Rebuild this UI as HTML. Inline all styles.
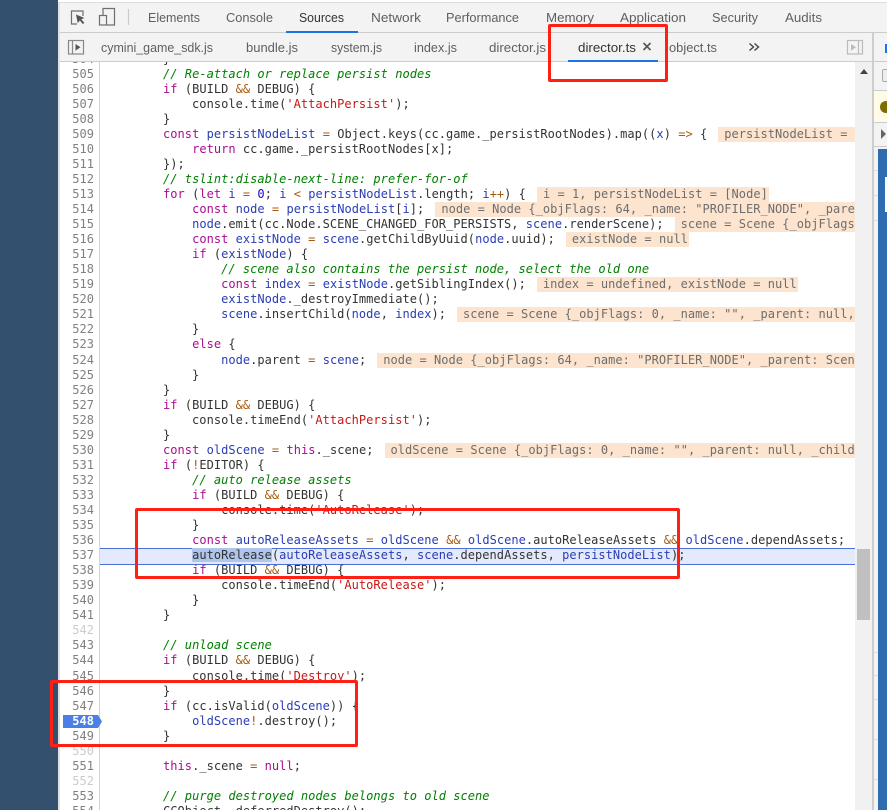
<!DOCTYPE html>
<html><head><meta charset="utf-8"><style>
html,body{margin:0;padding:0;width:887px;height:810px;overflow:hidden;background:#fff}
.a{position:absolute}
#gut,#code{font:12px/15.04px "DejaVu Sans Mono","Liberation Mono",monospace;white-space:pre;letter-spacing:.03px;filter:blur(.25px)}
#gut{left:60px;top:51.46px;width:34px;text-align:right;color:#808080}
#gut i{font-style:normal;color:#ccc}
#clip{left:100px;top:62px;width:755px;height:748px;overflow:hidden}
#code{position:absolute;left:5px;top:-10.42px;color:#333}
.k{color:#aa0d91}.v{color:#2a3db5}.o{color:#a8590c}.s{color:#c41a16}.c{color:#008000;font-style:italic}.n{color:#1c00cf}
.h{background:#fde4cf;color:#6e6e6e;margin-left:11px;padding:0 1px 0 6px;display:inline-block;height:15px;vertical-align:top}
.sel{background:#b0c5ec}
.box{position:absolute;border:3px solid #ff1f14;border-radius:2px;box-sizing:border-box}
</style></head><body>
<div class="a" style="left:0;top:0;width:58px;height:810px;background:#34506f"></div>
<div class="a" style="left:58px;top:0;width:829px;height:3px;background:#fff"></div>
<div class="a" style="left:58px;top:2px;width:829px;height:1px;background:#ddd"></div>
<div class="a" style="left:58px;top:3px;width:829px;height:59px;background:#f3f3f3"></div>
<div class="a" style="left:58px;top:3px;width:2px;height:807px;background:#e2e2e2"></div>
<div class="a" style="left:60px;top:32px;width:827px;height:1px;background:#ccc"></div>
<div class="a" style="left:60px;top:61px;width:827px;height:1px;background:#ccc"></div>
<div class="a" style="left:286px;top:31px;width:72px;height:2px;background:#1a73e8"></div>
<div class="a" style="left:568px;top:60px;width:90px;height:2px;background:#1a73e8"></div>

<svg class="a" style="left:0;top:0;filter:blur(.25px)" width="887" height="62" font-family="Liberation Sans, sans-serif" font-size="12.5" fill="#5f5f5f">
<g fill="none" stroke="#6e6e6e" stroke-width="1.2">
<path d="M77 24H71.5V11H83V16"/>
<rect x="99.5" y="15.5" width="7" height="9.5"/>
<path d="M103 15V8.5H114.5V25H107"/>
<path d="M128.5 9V25" stroke="#ccc"/>
<rect x="68.5" y="40.5" width="15" height="13.5" stroke="#888"/>
<path d="M72.5 40.5V54" stroke="#888"/>
<rect x="847.5" y="40.5" width="15" height="13.5" stroke="#bbb"/>
<path d="M858.5 40.5V54" stroke="#bbb"/>
<path d="M749.5 43.5l4 3.5-4 3.5M754.5 43.5l4 3.5-4 3.5" stroke="#444" stroke-width="1.4"/>
<path d="M643.5 43l7 7M650.5 43l-7 7" stroke="#555" stroke-width="1.6"/>
</g>
<path d="M76 14.5l8.5 3.5-3.2 1.3 3 3.6-1.4 1.2-3-3.6-2.2 2.6z" fill="#555"/>
<path d="M75.5 44l5 3.3-5 3.3z" fill="#555"/>
<path d="M851 44l5 3.3-5 3.3z" fill="#bbb"/>
<text x="148" y="22" textLength="52" lengthAdjust="spacingAndGlyphs">Elements</text>
<text x="226" y="22" textLength="47" lengthAdjust="spacingAndGlyphs">Console</text>
<text x="299" y="22" textLength="45" lengthAdjust="spacingAndGlyphs" fill="#333">Sources</text>
<text x="371" y="22" textLength="50" lengthAdjust="spacingAndGlyphs">Network</text>
<text x="446" y="22" textLength="73" lengthAdjust="spacingAndGlyphs">Performance</text>
<text x="546" y="22" textLength="48" lengthAdjust="spacingAndGlyphs">Memory</text>
<text x="620" y="22" textLength="66" lengthAdjust="spacingAndGlyphs">Application</text>
<text x="712" y="22" textLength="46" lengthAdjust="spacingAndGlyphs">Security</text>
<text x="785" y="22" textLength="37" lengthAdjust="spacingAndGlyphs">Audits</text>
<text x="101" y="52" textLength="112" lengthAdjust="spacingAndGlyphs">cymini_game_sdk.js</text>
<text x="246" y="52" textLength="52" lengthAdjust="spacingAndGlyphs">bundle.js</text>
<text x="331" y="52" textLength="51" lengthAdjust="spacingAndGlyphs">system.js</text>
<text x="414" y="52" textLength="43" lengthAdjust="spacingAndGlyphs">index.js</text>
<text x="489" y="52" textLength="57" lengthAdjust="spacingAndGlyphs">director.js</text>
<text x="578" y="52" textLength="58" lengthAdjust="spacingAndGlyphs" fill="#333">director.ts</text>
<text x="669" y="52" textLength="48" lengthAdjust="spacingAndGlyphs">object.ts</text>
</svg>

<!-- right side -->
<div class="a" style="left:855px;top:62px;width:17px;height:748px;background:#f1f1f1"></div>
<div class="a" style="left:857px;top:549px;width:13px;height:71px;background:#c0c0c0"></div>
<svg class="a" style="left:859px;top:67px" width="10" height="8"><path d="M1 7l4-5 4 5z" fill="#444"/></svg>
<div class="a" style="left:872px;top:33px;width:2px;height:777px;background:#cdcdcd"></div>
<div class="a" style="left:874px;top:62px;width:13px;height:748px;background:#f3f3f3"></div>
<div class="a" style="left:885px;top:44px;width:2px;height:9px;background:#1a73e8"></div>
<div class="a" style="left:882px;top:69px;width:8px;height:11px;border:1px solid #aaa;border-radius:2px;background:#eee"></div>
<div class="a" style="left:874px;top:90px;width:13px;height:1px;background:#ccc"></div>
<div class="a" style="left:874px;top:91px;width:13px;height:31px;background:#fffbe6"></div>
<div class="a" style="left:880px;top:101px;width:12px;height:12px;border-radius:50%;background:#7d6b00"></div>
<div class="a" style="left:874px;top:122px;width:13px;height:1px;background:#ccc"></div>
<div class="a" style="left:874px;top:146px;width:13px;height:1px;background:#ccc"></div>
<svg class="a" style="left:880px;top:129px" width="7" height="10"><path d="M1 0l5 5-5 5z" fill="#666"/></svg>
<div class="a" style="left:878px;top:149px;width:9px;height:661px;background:#2f6bb1"></div>
<div class="a" style="left:885px;top:177px;width:2px;height:35px;background:#fff"></div>
<div class="a" style="left:874px;top:170px;width:4px;height:1px;background:#ddd"></div>
<div class="a" style="left:874px;top:195px;width:4px;height:1px;background:#ddd"></div>
<div class="a" style="left:874px;top:220px;width:4px;height:1px;background:#ddd"></div>
<div class="a" style="left:874px;top:652px;width:4px;height:1px;background:#ddd"></div>
<div class="a" style="left:874px;top:675px;width:4px;height:1px;background:#ddd"></div>
<div class="a" style="left:874px;top:699px;width:4px;height:1px;background:#ddd"></div>
<div class="a" style="left:874px;top:739px;width:4px;height:1px;background:#ddd"></div>
<div class="a" style="left:874px;top:779px;width:4px;height:1px;background:#ddd"></div>

<!-- gutter -->
<div class="a" style="left:60px;top:62px;width:39px;height:748px;background:#fff"></div>
<div class="a" style="left:99px;top:62px;width:1px;height:748px;background:#d4d4d4"></div>
<div class="a" style="left:100px;top:548px;width:755px;height:15px;background:#e4eafb;border-top:1px solid #4a70d9;border-bottom:1px solid #4a70d9"></div>
<svg class="a" style="left:63px;top:715px" width="40" height="14"><path d="M0 0H35L39 6.5 35 13H0z" fill="#4c7fe6"/></svg>
<div class="a" style="left:60px;top:62px;width:39px;height:748px;overflow:hidden"><div id="gut" class="a" style="left:0;top:-10.42px">504
505
506
507
508
509
510
511
512
513
514
515
516
517
518
519
520
521
522
523
524
525
526
527
528
529
530
531
532
533
534
535
536
537
538
539
540
541
<i>542</i>
543
544
545
546
547
<b style="color:#fff">548</b>
549
<i>550</i>
551
<i>552</i>
553
554</div></div>

<div id="clip" class="a"><div id="code">        }
        <span class="c">// Re-attach or replace persist nodes</span>
        <span class="k">if</span> (BUILD <span class="o">&amp;&amp;</span> DEBUG) {
            console.time(<span class="s">'AttachPersist'</span>);
        }
        <span class="k">const</span> <span class="v">persistNodeList</span> <span class="o">=</span> Object.keys(cc.game._persistRootNodes).map((<span class="v">x</span>) <span class="o">=&gt;</span> {<span class="h">persistNodeList = ["PROFILER_NODE"]</span>
            <span class="k">return</span> cc.game._persistRootNodes[x];
        });
        <span class="c">// tslint:disable-next-line: prefer-for-of</span>
        <span class="k">for</span> (<span class="k">let</span> <span class="v">i</span> <span class="o">=</span> <span class="n">0</span>; <span class="v">i</span> <span class="o">&lt;</span> <span class="v">persistNodeList</span>.length; <span class="v">i</span><span class="o">++</span>) {<span class="h">i = 1, persistNodeList = [Node]</span>
            <span class="k">const</span> <span class="v">node</span> <span class="o">=</span> <span class="v">persistNodeList</span>[<span class="v">i</span>];<span class="h">node = Node {_objFlags: 64, _name: "PROFILER_NODE", _parent: Scene, _children: []}</span>
            <span class="v">node</span>.emit(cc.Node.SCENE_CHANGED_FOR_PERSISTS, <span class="v">scene</span>.renderScene);<span class="h">scene = Scene {_objFlags: 0, _name: "", _parent: null}</span>
            <span class="k">const</span> <span class="v">existNode</span> <span class="o">=</span> <span class="v">scene</span>.getChildByUuid(<span class="v">node</span>.uuid);<span class="h">existNode = null</span>
            <span class="k">if</span> (<span class="v">existNode</span>) {
                <span class="c">// scene also contains the persist node, select the old one</span>
                <span class="k">const</span> <span class="v">index</span> <span class="o">=</span> <span class="v">existNode</span>.getSiblingIndex();<span class="h">index = undefined, existNode = null</span>
                <span class="v">existNode</span>._destroyImmediate();
                <span class="v">scene</span>.insertChild(<span class="v">node</span>, <span class="v">index</span>);<span class="h">scene = Scene {_objFlags: 0, _name: "", _parent: null, _children: [], _id: ""}</span>
            }
            <span class="k">else</span> {
                <span class="v">node</span>.parent <span class="o">=</span> <span class="v">scene</span>;<span class="h">node = Node {_objFlags: 64, _name: "PROFILER_NODE", _parent: Scene, _children: []}</span>
            }
        }
        <span class="k">if</span> (BUILD <span class="o">&amp;&amp;</span> DEBUG) {
            console.timeEnd(<span class="s">'AttachPersist'</span>);
        }
        <span class="k">const</span> <span class="v">oldScene</span> <span class="o">=</span> <span class="k">this</span>._scene;<span class="h">oldScene = Scene {_objFlags: 0, _name: "", _parent: null, _children: [], _id: ""}</span>
        <span class="k">if</span> (<span class="o">!</span>EDITOR) {
            <span class="c">// auto release assets</span>
            <span class="k">if</span> (BUILD <span class="o">&amp;&amp;</span> DEBUG) {
                console.time(<span class="s">'AutoRelease'</span>);
            }
            <span class="k">const</span> <span class="v">autoReleaseAssets</span> <span class="o">=</span> <span class="v">oldScene</span> <span class="o">&amp;&amp;</span> <span class="v">oldScene</span>.autoReleaseAssets <span class="o">&amp;&amp;</span> <span class="v">oldScene</span>.dependAssets;
            <span class="sel">autoRelease</span>(<span class="v">autoReleaseAssets</span>, <span class="v">scene</span>.dependAssets, <span class="v">persistNodeList</span>);
            <span class="k">if</span> (BUILD <span class="o">&amp;&amp;</span> DEBUG) {
                console.timeEnd(<span class="s">'AutoRelease'</span>);
            }
        }

        <span class="c">// unload scene</span>
        <span class="k">if</span> (BUILD <span class="o">&amp;&amp;</span> DEBUG) {
            console.time(<span class="s">'Destroy'</span>);
        }
        <span class="k">if</span> (cc.isValid(<span class="v">oldScene</span>)) {
            <span class="v">oldScene</span><span class="o">!</span>.destroy();
        }

        <span class="k">this</span>._scene <span class="o">=</span> <span class="k">null</span>;

        <span class="c">// purge destroyed nodes belongs to old scene</span>
        CCObject._deferredDestroy();</div></div>

<div class="box" style="left:548px;top:24px;width:120px;height:58px"></div>
<div class="box" style="left:135px;top:508px;width:545px;height:71px"></div>
<div class="box" style="left:50px;top:680px;width:308px;height:67px"></div>
</body></html>
